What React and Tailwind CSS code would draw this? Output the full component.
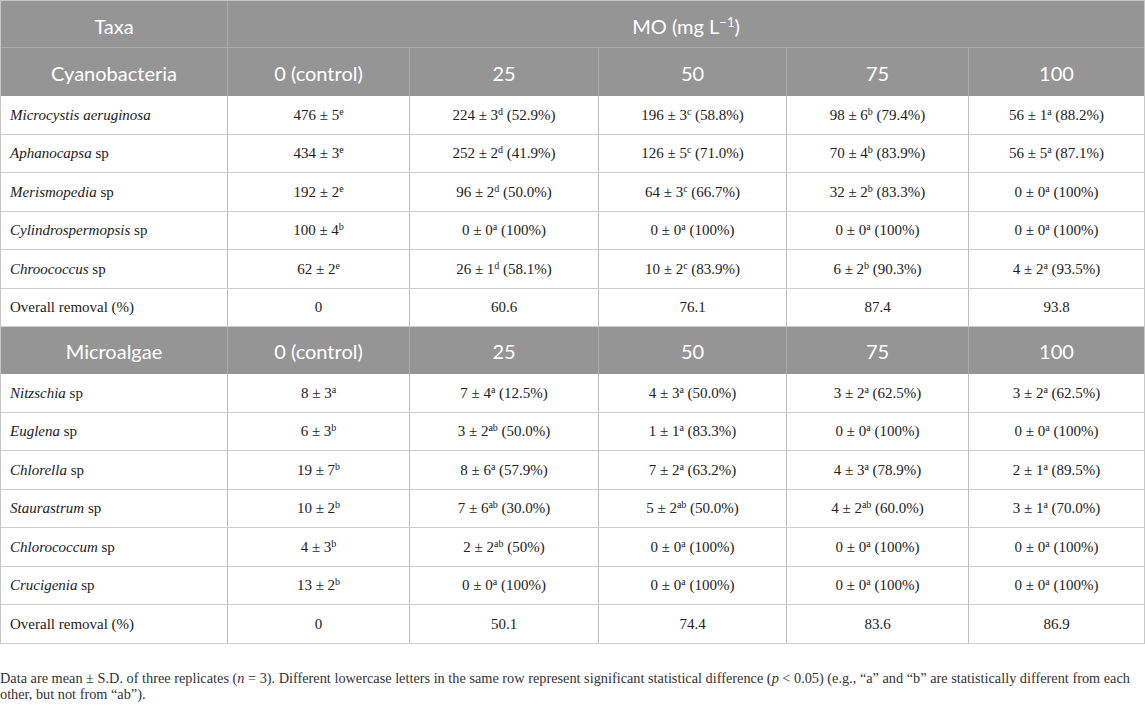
import React from "react";

const cols = "grid grid-cols-[227px_182px_189px_188px_182px_1fr]";

function V({ v }) {
  if (typeof v === "string") return <span>{v}</span>;
  const [n, sd, l, p] = v;
  return (
    <span>
      {n} ± {sd}
      <sup className="text-[10px]">{l}</sup>
      {p ? ` (${p})` : ""}
    </span>
  );
}

function Name({ name }) {
  if (name.startsWith("Overall")) return <span>{name}</span>;
  if (name.endsWith(" sp")) {
    return (
      <span>
        <i>{name.slice(0, -3)}</i> sp
      </span>
    );
  }
  return <i>{name}</i>;
}

function DataRow({ r }) {
  return (
    <div className={`${cols} h-[38.5px] border-b border-[#cdcdcd]`}>
      <div className="flex items-center pl-[9px] border-r border-[#bdbdbd]">
        <Name name={r[0]} />
      </div>
      {r.slice(1).map((v, i) => (
        <div
          key={i}
          className={`flex items-center justify-center ${i < 4 ? "border-r border-[#bdbdbd]" : ""}`}
        >
          <V v={v} />
        </div>
      ))}
    </div>
  );
}

function SubHeader({ label, h }) {
  const labels = [label, "0 (control)", "25", "50", "75", "100"];
  return (
    <div className={`${cols} ${h} bg-[#959595] text-white text-[20px] font-['Lato',sans-serif]`}>
      {labels.map((t, i) => (
        <div
          key={i}
          className={`flex items-center justify-center pt-[1px] ${i < 5 ? "border-r border-[#aaaaaa]" : ""}`}
        >
          {t}
        </div>
      ))}
    </div>
  );
}

const cyano = [
  ["Microcystis aeruginosa", [476, 5, "e"], [224, 3, "d", "52.9%"], [196, 3, "c", "58.8%"], [98, 6, "b", "79.4%"], [56, 1, "a", "88.2%"]],
  ["Aphanocapsa sp", [434, 3, "e"], [252, 2, "d", "41.9%"], [126, 5, "c", "71.0%"], [70, 4, "b", "83.9%"], [56, 5, "a", "87.1%"]],
  ["Merismopedia sp", [192, 2, "e"], [96, 2, "d", "50.0%"], [64, 3, "c", "66.7%"], [32, 2, "b", "83.3%"], [0, 0, "a", "100%"]],
  ["Cylindrospermopsis sp", [100, 4, "b"], [0, 0, "a", "100%"], [0, 0, "a", "100%"], [0, 0, "a", "100%"], [0, 0, "a", "100%"]],
  ["Chroococcus sp", [62, 2, "e"], [26, 1, "d", "58.1%"], [10, 2, "c", "83.9%"], [6, 2, "b", "90.3%"], [4, 2, "a", "93.5%"]],
  ["Overall removal (%)", "0", "60.6", "76.1", "87.4", "93.8"],
];

const algae = [
  ["Nitzschia sp", [8, 3, "a"], [7, 4, "a", "12.5%"], [4, 3, "a", "50.0%"], [3, 2, "a", "62.5%"], [3, 2, "a", "62.5%"]],
  ["Euglena sp", [6, 3, "b"], [3, 2, "ab", "50.0%"], [1, 1, "a", "83.3%"], [0, 0, "a", "100%"], [0, 0, "a", "100%"]],
  ["Chlorella sp", [19, 7, "b"], [8, 6, "a", "57.9%"], [7, 2, "a", "63.2%"], [4, 3, "a", "78.9%"], [2, 1, "a", "89.5%"]],
  ["Staurastrum sp", [10, 2, "b"], [7, 6, "ab", "30.0%"], [5, 2, "ab", "50.0%"], [4, 2, "ab", "60.0%"], [3, 1, "a", "70.0%"]],
  ["Chlorococcum sp", [4, 3, "b"], [2, 2, "ab", "50%"], [0, 0, "a", "100%"], [0, 0, "a", "100%"], [0, 0, "a", "100%"]],
  ["Crucigenia sp", [13, 2, "b"], [0, 0, "a", "100%"], [0, 0, "a", "100%"], [0, 0, "a", "100%"], [0, 0, "a", "100%"]],
  ["Overall removal (%)", "0", "50.1", "74.4", "83.6", "86.9"],
];

export default function App() {
  return (
    <div className="w-[1145px] h-[706px] bg-white overflow-hidden font-['Liberation_Serif','Times_New_Roman',serif]">
      <div className="border-t border-l border-r border-[#c6c6c6] text-[15px] text-[#222]">
        <div className="grid grid-cols-[227px_1fr] h-[47px] bg-[#959595] text-white text-[20px] border-b border-[#aaaaaa] font-['Lato',sans-serif]">
          <div className="flex items-center justify-center pt-[3px] border-r border-[#aaaaaa]">Taxa</div>
          <div className="flex items-center justify-center pt-[3px]">
            <span>
              MO (mg L<sup className="text-[13px]">−1</sup>)
            </span>
          </div>
        </div>
        <SubHeader label="Cyanobacteria" h="h-[48px]" />
        {cyano.map((r, i) => (
          <DataRow key={i} r={r} />
        ))}
        <SubHeader label="Microalgae" h="h-[47px]" />
        {algae.map((r, i) => (
          <DataRow key={i} r={r} />
        ))}
      </div>
      <p className="mt-[26px] text-[14.3px] leading-[16px] text-[#333] whitespace-nowrap">
        Data are mean ± S.D. of three replicates (<i>n</i> = 3). Different lowercase letters in the same row represent
        significant statistical difference (<i>p</i> &lt; 0.05) (e.g., “a” and “b” are statistically different from each
        <br />
        other, but not from “ab”).
      </p>
    </div>
  );
}
